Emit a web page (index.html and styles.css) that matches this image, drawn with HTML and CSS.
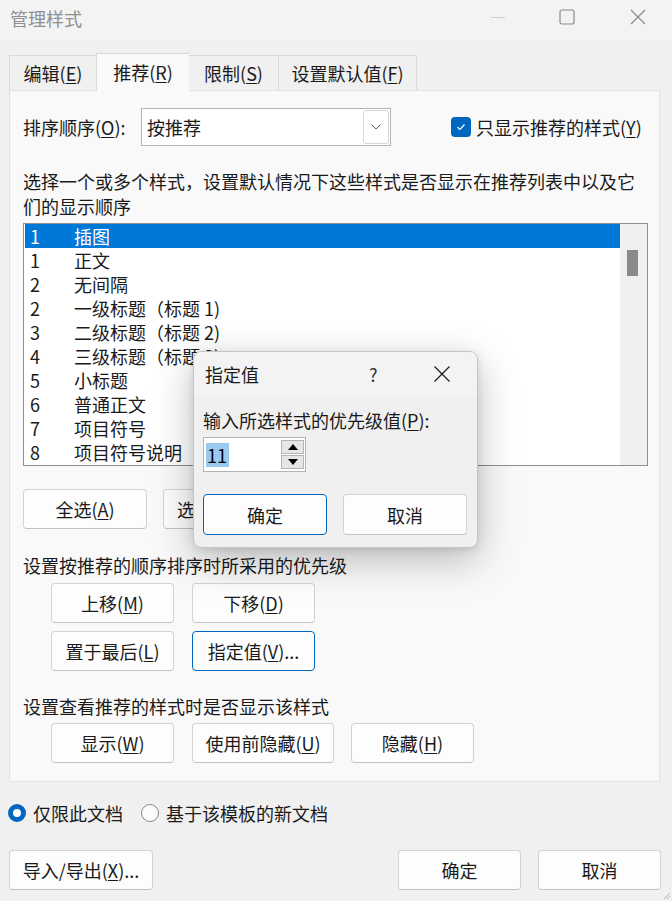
FILE: index.html
```html
<!DOCTYPE html>
<html lang="zh-CN">
<head>
<meta charset="utf-8">
<title>管理样式</title>
<link rel="stylesheet" href="styles.css">
</head>
<body>
<div class="window">
  <div class="titlebar">
    <span class="title">管理样式</span>
    <div class="caption">
      <svg class="cap-min" width="16" height="16" viewBox="0 0 16 16"><path d="M1 8.5H15" stroke="#cfcfcf" stroke-width="1"/></svg>
      <svg class="cap-max" width="16" height="16" viewBox="0 0 16 16"><rect x="1" y="1" width="14" height="14" rx="2" fill="none" stroke="#8a8a8a" stroke-width="1.2"/></svg>
      <svg class="cap-close" width="16" height="16" viewBox="0 0 16 16"><path d="M1 1L15 15M15 1L1 15" stroke="#8a8a8a" stroke-width="1.2"/></svg>
    </div>
  </div>

  <div class="tabs">
    <div class="tab t1">编辑(<u>E</u>)</div>
    <div class="tab t2 active">推荐(<u>R</u>)</div>
    <div class="tab t3">限制(<u>S</u>)</div>
    <div class="tab t4">设置默认值(<u>F</u>)</div>
  </div>

  <div class="panel">
    <div class="sort-row">
      <span class="sort-label">排序顺序(<u>O</u>):</span>
      <div class="combo">
        <span class="combo-text">按推荐</span>
        <div class="combo-btn">
          <svg width="12" height="8" viewBox="0 0 12 8"><path d="M1.5 1.5L6 6L10.5 1.5" fill="none" stroke="#606060" stroke-width="1"/></svg>
        </div>
      </div>
      <div class="check">
        <span class="checkbox">
          <svg width="12" height="10" viewBox="0 0 12 10"><path d="M2.5 5.2L5 7.5L9.5 2.5" fill="none" stroke="#fff" stroke-width="1.2"/></svg>
        </span>
        <span>只显示推荐的样式(<u>Y</u>)</span>
      </div>
    </div>

    <p class="desc">选择一个或多个样式，设置默认情况下这些样式是否显示在推荐列表中以及它们的显示顺序</p>

    <div class="listbox">
      <div class="items">
        <div class="item selected"><span class="num">1</span><span>插图</span></div>
        <div class="item"><span class="num">1</span><span>正文</span></div>
        <div class="item"><span class="num">2</span><span>无间隔</span></div>
        <div class="item"><span class="num">2</span><span>一级标题（标题 1)</span></div>
        <div class="item"><span class="num">3</span><span>二级标题（标题 2)</span></div>
        <div class="item"><span class="num">4</span><span>三级标题（标题 3)</span></div>
        <div class="item"><span class="num">5</span><span>小标题</span></div>
        <div class="item"><span class="num">6</span><span>普通正文</span></div>
        <div class="item"><span class="num">7</span><span>项目符号</span></div>
        <div class="item"><span class="num">8</span><span>项目符号说明</span></div>
      </div>
      <div class="scrollbar"><div class="thumb"></div></div>
    </div>

    <div class="select-row">
      <button class="btn">全选(<u>A</u>)</button>
      <button class="btn">选择内置(<u>B</u>)</button>
    </div>

    <div class="section-label">设置按推荐的顺序排序时所采用的优先级</div>
    <div class="btn-grid">
      <button class="btn">上移(<u>M</u>)</button>
      <button class="btn">下移(<u>D</u>)</button>
      <button class="btn">置于最后(<u>L</u>)</button>
      <button class="btn focus">指定值(<u>V</u>)...</button>
    </div>

    <div class="section-label second">设置查看推荐的样式时是否显示该样式</div>
    <div class="btn-line">
      <button class="btn">显示(<u>W</u>)</button>
      <button class="btn wide">使用前隐藏(<u>U</u>)</button>
      <button class="btn">隐藏(<u>H</u>)</button>
    </div>
  </div>

  <div class="radio-row">
    <div class="radio-opt"><span class="radio on"></span><span>仅限此文档</span></div>
    <div class="radio-opt"><span class="radio"></span><span>基于该模板的新文档</span></div>
  </div>

  <div class="footer">
    <button class="btn export">导入/导出(<u>X</u>)...</button>
    <div class="footer-right">
      <button class="btn">确定</button>
      <button class="btn">取消</button>
    </div>
  </div>

  <svg class="grip" width="10" height="10" viewBox="0 0 10 10"><path d="M9 3L3 9M9 6L6 9" stroke="#b0b0b0" stroke-width="1"/></svg>

  <div class="dialog">
    <div class="dlg-title">
      <span class="dlg-name">指定值</span>
      <span class="dlg-help">?</span>
      <svg class="dlg-close" width="18" height="18" viewBox="0 0 18 18"><path d="M1.5 1.5L16.5 16.5M16.5 1.5L1.5 16.5" stroke="#1a1a1a" stroke-width="1.2"/></svg>
    </div>
    <div class="dlg-body">
      <div class="dlg-label">输入所选样式的优先级值(<u>P</u>):</div>
      <div class="spinner">
        <span class="spin-val">11</span>
        <div class="spin-btns">
          <div class="spin-btn"><svg width="10" height="6" viewBox="0 0 10 6"><path d="M0 6L5 0L10 6Z" fill="#000"/></svg></div>
          <div class="spin-btn"><svg width="10" height="6" viewBox="0 0 10 6"><path d="M0 0L5 6L10 0Z" fill="#000"/></svg></div>
        </div>
      </div>
      <div class="dlg-btns">
        <button class="btn focus">确定</button>
        <button class="btn">取消</button>
      </div>
    </div>
  </div>
</div>
</body>
</html>
```

FILE: styles.css
```css
* { box-sizing: border-box; }
html, body { margin: 0; padding: 0; }
body {
  font-family: "Noto Sans CJK SC", "Noto Sans", sans-serif;
  font-size: 18px;
  color: #1a1a1a;
  background: #f0f0f0;
}
u { text-decoration: underline; text-underline-offset: 2px; text-decoration-thickness: 1px; }

.window {
  position: relative;
  width: 672px;
  height: 901px;
  background: #f0f0f0;
  overflow: hidden;
}

/* title bar */
.titlebar {
  height: 40px;
  background: #f3f3f3;
  display: flex;
  align-items: center;
  padding-left: 10px;
}
.title { color: #8f8f8f; font-size: 18px; line-height: 24px; margin-top: -4px; }
.caption { margin-left: auto; display: flex; align-items: center; margin-top: -6px; }
.cap-min { margin-right: 53px; }
.cap-max { margin-right: 55px; }
.cap-close { margin-right: 26px; }

/* tabs */
.tabs {
  display: flex;
  align-items: flex-end;
  height: 50px;
  padding-left: 9px;
}
.tab {
  height: 35px;
  border: 1px solid #dadada;
  border-bottom: none;
  border-right: none;
  background: #f0f0f0;
  display: flex;
  align-items: center;
  justify-content: center;
  line-height: 24px;
  padding-bottom: 1px;
  white-space: nowrap;
}
.tab:last-child { border-right: 1px solid #dadada; }
.tab.t1 { width: 87px; }
.tab.t2 { width: 93px; }
.tab.t3 { width: 89px; }
.tab.t4 { width: 139px; }
.tab.active {
  height: 38px;
  background: #f9f9f9;
  position: relative;
  z-index: 2;
  margin-bottom: -1px;
  padding-bottom: 2px;
}
.tab.active + .tab { border-left: none; }

/* panel */
.panel {
  margin: 0 12px 0 9px;
  height: 692px;
  background: #f9f9f9;
  border: 1px solid #e2e2e2;
  padding: 17px 0 0 13px;
}

.sort-row { display: flex; align-items: center; height: 38px; }
.sort-label { width: 118px; line-height: 24px; white-space: nowrap; }
.combo {
  width: 250px;
  height: 38px;
  border: 1px solid #b4b4b4;
  background: #fff;
  display: flex;
  align-items: center;
  padding-left: 5px;
}
.combo-text { flex: 1; line-height: 24px; }
.combo-btn {
  width: 26px;
  height: 34px;
  margin-right: 1px;
  border: 1px solid #d6d6d6;
  border-radius: 3px;
  display: flex;
  align-items: center;
  justify-content: center;
}
.check { display: flex; align-items: center; margin-left: 60px; line-height: 24px; white-space: nowrap; }
.checkbox {
  width: 20px; height: 20px;
  border-radius: 4px;
  background: #0067c0;
  display: flex; align-items: center; justify-content: center;
  margin-right: 5px;
}

.desc {
  margin: 23px 0 0;
  width: 622px;
  line-height: 25px;
}

.listbox {
  margin-top: 4px;
  width: 625px;
  height: 243px;
  border: 1px solid #8f8f8f;
  background: #fff;
  display: flex;
}
.items { flex: 1; padding-left: 1px; }
.item {
  height: 24px;
  line-height: 24px;
  display: flex;
  padding-left: 5px;
  white-space: nowrap;
}
.item .num { width: 44px; }
.item.selected { background: #0078d7; color: #fff; }
.scrollbar { width: 27px; background: #f0f0f0; position: relative; }
.thumb {
  position: absolute;
  left: 7px; top: 26px;
  width: 11px; height: 26px;
  background: #8a8a8a;
}

.btn {
  font: inherit;
  font-size: 18px;
  color: #1a1a1a;
  width: 123px;
  height: 40px;
  background: #fdfdfd;
  border: 1px solid #d3d3d3;
  border-bottom-color: #c2c2c2;
  border-radius: 4px;
  padding: 0;
  line-height: 24px;
  display: inline-flex;
  align-items: center;
  justify-content: center;
  white-space: nowrap;
}
.btn.focus { border-color: #0067c0; }

.select-row { display: flex; gap: 16px; margin-top: 23px; }
.select-row .btn { width: 124px; }

.section-label { margin-top: 24px; line-height: 24px; }
.section-label.second { margin-top: 23px; }

.btn-grid {
  display: grid;
  grid-template-columns: 123px 123px;
  column-gap: 18px;
  row-gap: 8px;
  margin: 6px 0 0 28px;
}
.btn-line { display: flex; gap: 18px; margin: 5px 0 0 28px; }
.btn-line .btn.wide { width: 142px; }
.btn-line .btn.wide + .btn { margin-left: -1px; }

/* radios */
.radio-row {
  display: flex;
  align-items: center;
  gap: 18px;
  height: 24px;
  margin-top: 19px;
  padding-left: 8px;
}
.radio-opt { display: flex; align-items: center; line-height: 24px; }
.radio {
  width: 18px; height: 18px;
  border-radius: 50%;
  border: 1px solid #8a8a8a;
  background: #fbfbfb;
  margin-right: 7px;
}
.radio.on {
  border: 5px solid #0067c0;
  background: #fff;
}

/* footer */
.footer {
  display: flex;
  margin-top: 25px;
  padding: 0 11px 0 9px;
}
.btn.export { width: 144px; }
.footer-right { margin-left: auto; display: flex; gap: 17px; }

.grip { position: absolute; right: 1px; bottom: 1px; }

/* modal dialog */
.dialog {
  position: absolute;
  left: 193px;
  top: 351px;
  width: 285px;
  height: 197px;
  background: #f0f0f0;
  border: 1px solid #c4c4c4;
  border-radius: 8px;
  box-shadow: 0 12px 40px rgba(0, 0, 0, 0.26), 0 2px 8px rgba(0, 0, 0, 0.1);
  overflow: hidden;
  z-index: 10;
}
.dlg-title {
  height: 43px;
  background: #f3f3f3;
  display: flex;
  align-items: center;
  padding-left: 11px;
  white-space: nowrap;
}
.dlg-name { line-height: 24px; flex-shrink: 0; }
.dlg-help { margin-left: 110px; color: #333; line-height: 24px; flex-shrink: 0; }
.dlg-close { margin-left: 55px; flex-shrink: 0; }
.dlg-body { padding: 13px 0 0 9px; }
.dlg-label { line-height: 24px; white-space: nowrap; }
.spinner {
  margin-top: 5px;
  width: 103px;
  height: 35px;
  border: 1px solid #b4b4b4;
  background: #fff;
  display: flex;
  align-items: center;
  padding-left: 2px;
}
.spin-val {
  background: #99c9ef;
  line-height: 24px;
  padding: 0 2px 0 1px;
  color: #000;
}
.spin-btns {
  margin-left: auto;
  margin-right: 1px;
  display: flex;
  flex-direction: column;
  gap: 1px;
}
.spin-btn {
  width: 23px;
  height: 14px;
  background: #e6e6e6;
  border: 1px solid #b4b4b4;
  display: flex;
  align-items: center;
  justify-content: center;
}
.dlg-btns { display: flex; gap: 16px; margin-top: 22px; }
.dlg-btns .btn { width: 124px; height: 41px; }
```
